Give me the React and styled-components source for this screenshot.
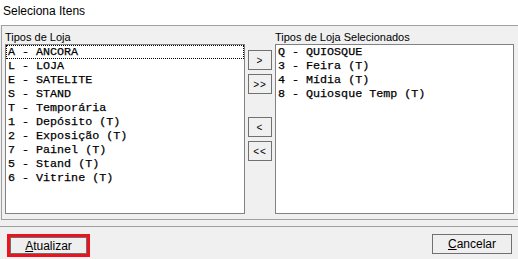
import React from 'react'
import styled, { createGlobalStyle } from 'styled-components'

const GlobalStyle = createGlobalStyle`
  body {
    margin: 0;
    background: #f0f0f0;
    font-family: 'Liberation Sans', Arial, sans-serif;
  }
`

const Window = styled.div`
  width: 518px;
  height: 259px;
  display: flex;
  flex-direction: column;
  background: #f0f0f0;
  overflow: hidden;
`

const Header = styled.div`
  height: 25px;
  box-sizing: border-box;
  background: #fff;
  padding: 3px 0 0 3px;
  font-size: 12px;
  line-height: 16px;
  color: #000;
`

const Panel = styled.div`
  margin-left: 1px;
  border-top: 1px solid #a0a0a0;
  border-left: 1px solid #a0a0a0;
  border-bottom: 1px solid #a0a0a0;
  padding: 4px 0 5px 3px;
  display: grid;
  grid-template-columns: 240px 24px 239px;
  grid-template-rows: 14px 170px;
  column-gap: 3px;
`

const Label = styled.div`
  font-size: 11px;
  line-height: 14px;
  color: #000;
  white-space: nowrap;
`

const ListBox = styled.div`
  box-sizing: border-box;
  height: 170px;
  background: #fff;
  border: 1px solid #828282;
  overflow: hidden;
`

const Row = styled.div`
  height: 14px;
  box-sizing: border-box;
  padding-left: 1px;
  border: 1px ${(p) => (p.focused ? 'dotted #000' : 'solid transparent')};
  font-family: 'Liberation Mono', 'Courier New', monospace;
  font-size: 11.7px;
  line-height: 12px;
  color: #000;
  -webkit-text-stroke: 0.25px #000;
  white-space: pre;
`

const ButtonColumn = styled.div`
  display: flex;
  flex-direction: column;
  padding-top: 6px;
`

const MoveButton = styled.button`
  width: 24px;
  height: 20px;
  margin-top: ${(p) => (p.spaced ? '23px' : '4px')};
  &:first-child {
    margin-top: 0;
  }
  padding: 0;
  background: #f0f0f0;
  border: 1px solid #707070;
  font-family: 'Liberation Sans', Arial, sans-serif;
  font-size: 10px;
  color: #000;
  letter-spacing: 1px;
`

const Footer = styled.div`
  margin-top: 6px;
  border-top: 1px solid #a0a0a0;
  flex: 1;
  display: flex;
  justify-content: space-between;
  align-items: flex-start;
  padding: 7px 6px 0 7px;
`

const Highlight = styled.div`
  border: 3px solid #e8141e;
  display: flex;
`

const DialogButton = styled.button`
  box-sizing: border-box;
  width: ${(p) => p.w}px;
  height: ${(p) => p.h}px;
  padding: 0;
  background: #efefef;
  border: 1px solid #707070;
  font-family: 'Liberation Sans', Arial, sans-serif;
  font-size: 12px;
  color: #000;
`

const leftItems = [
  'A - ANCORA',
  'L - LOJA',
  'E - SATELITE',
  'S - STAND',
  'T - Temporária',
  '1 - Depósito (T)',
  '2 - Exposição (T)',
  '7 - Painel (T)',
  '5 - Stand (T)',
  '6 - Vitrine (T)'
]

const rightItems = ['Q - QUIOSQUE', '3 - Feira (T)', '4 - Mídia (T)', '8 - Quiosque Temp (T)']

const App = () => {
  return (
    <>
      <GlobalStyle />
      <Window>
        <Header>Seleciona Itens</Header>
        <Panel>
          <Label>Tipos de Loja</Label>
          <div />
          <Label>Tipos de Loja Selecionados</Label>
          <ListBox>
            {leftItems.map((item, i) => (
              <Row key={item} focused={i === 0}>
                {item}
              </Row>
            ))}
          </ListBox>
          <ButtonColumn>
            <MoveButton>&gt;</MoveButton>
            <MoveButton>&gt;&gt;</MoveButton>
            <MoveButton spaced>&lt;</MoveButton>
            <MoveButton>&lt;&lt;</MoveButton>
          </ButtonColumn>
          <ListBox>
            {rightItems.map((item) => (
              <Row key={item}>{item}</Row>
            ))}
          </ListBox>
        </Panel>
        <Footer>
          <Highlight>
            <DialogButton w={77} h={17}>
              <u>A</u>tualizar
            </DialogButton>
          </Highlight>
          <DialogButton w={80} h={20}>
            <u>C</u>ancelar
          </DialogButton>
        </Footer>
      </Window>
    </>
  )
}

export default App
